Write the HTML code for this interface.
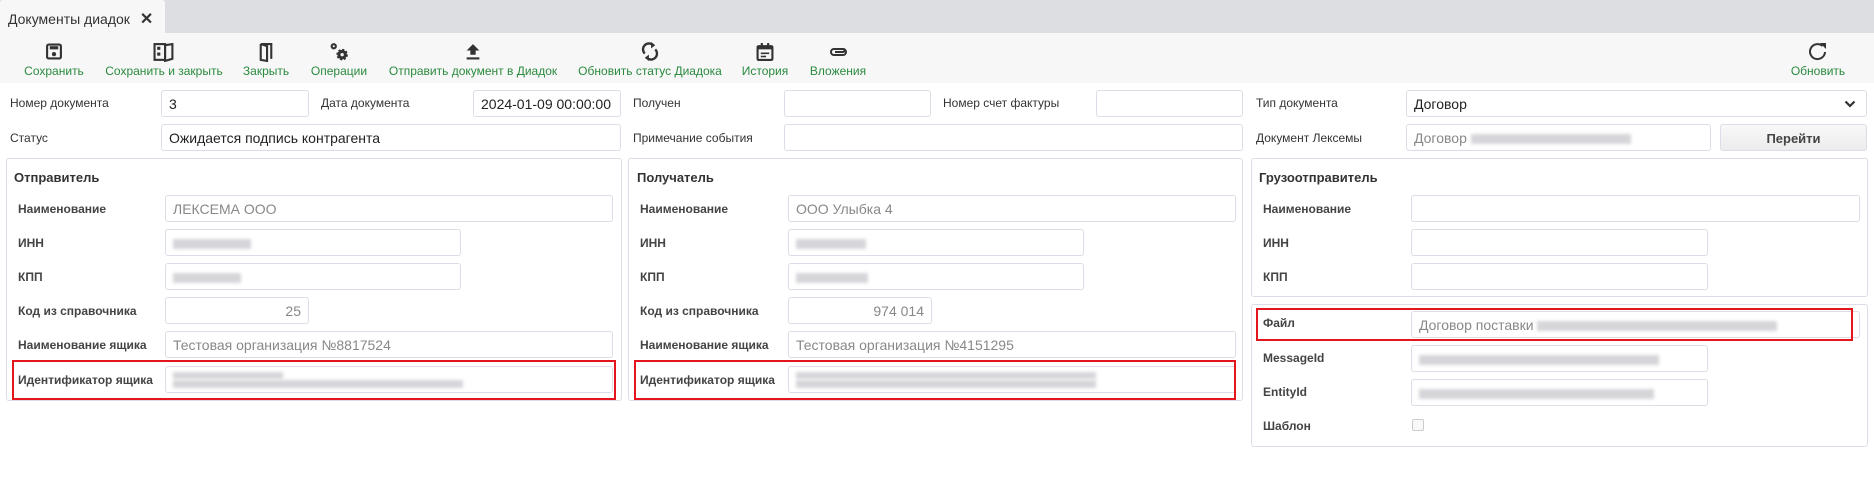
<!DOCTYPE html>
<html><head><meta charset="utf-8"><style>
*{box-sizing:border-box;margin:0;padding:0}
body{width:1874px;height:479px;background:#fff;font-family:"Liberation Sans",sans-serif;color:#333;position:relative;overflow:hidden}
.a{position:absolute}
.tabbar{left:0;top:0;width:1874px;height:33px;background:#dcdee2}
.tab{left:0;top:0;width:165px;height:33px;background:#f7f7f7;border-radius:3px 3px 0 0;font-size:14px;color:#333;padding:9px 0 0 8px}
.tb{left:0;top:33px;width:1874px;height:50px;background:#f7f7f7}
.ti{font-size:12px;color:#2a8a3e;text-align:center;white-space:nowrap;top:64px;transform:translateX(-50%)}
.ic{top:43px;transform:translateX(-50%)}
.lbl{font-size:12px;color:#333;white-space:nowrap}
.lb{font-size:12px;font-weight:bold;color:#444;white-space:nowrap}
.in{border:1px solid #dcdde6;border-radius:3px;background:#fff;height:27px;font-size:14px;padding:5px 7px;color:#222;white-space:nowrap;overflow:hidden}
.ro{color:#888}
.box{border:1px solid #dcdde6;border-radius:3px}
.red{border:2px solid #e3151d}
.bl{display:inline-block;height:10px;background:#d6d6da;filter:blur(1.5px);vertical-align:middle}
.ttl{font-size:13px;font-weight:bold;color:#333}
</style></head><body>
<div class="a tabbar"></div>
<div class="a tab">Документы диадок <span style="font-size:16px;margin-left:6px;font-weight:bold">✕</span></div>
<div class="a tb"></div>

<svg class="a ic" style="left:54px" width="17" height="17" viewBox="0 0 16 16"><rect x="1.5" y="1.5" width="13" height="13" rx="1.5" fill="none" stroke="#333" stroke-width="2"/><rect x="4" y="3" width="8" height="3" fill="#333"/><circle cx="8" cy="10.5" r="2" fill="#333"/></svg>
<svg class="a ic" style="left:164px" width="21" height="19" viewBox="0 0 20 18"><rect x="1" y="1" width="10" height="15" fill="none" stroke="#333" stroke-width="2"/><rect x="3.5" y="3.5" width="3" height="3" fill="#333"/><rect x="3.5" y="9" width="3" height="3" fill="#333"/><path d="M11 2 L18 1 L18 15 L11 17 Z" fill="none" stroke="#333" stroke-width="2"/></svg>
<svg class="a ic" style="left:266px" width="15" height="19" viewBox="0 0 14 18"><path d="M2 1 L12 1 L12 15 M2 1 L2 16 L8 17 L8 3 L2 1" fill="none" stroke="#333" stroke-width="2"/></svg>
<svg class="a ic" style="left:339px;top:41px" width="21" height="21" viewBox="0 0 20 20"><circle cx="5" cy="5" r="3" fill="#333"/><circle cx="5" cy="5" r="1" fill="#f7f7f7"/><circle cx="13" cy="13" r="4.5" fill="#333" stroke="#333" stroke-width="2" stroke-dasharray="2 1.5"/><circle cx="13" cy="13" r="1.6" fill="#f7f7f7"/></svg>
<svg class="a ic" style="left:473px" width="15" height="17" viewBox="0 0 14 16"><path d="M7 1 L13 7 L9.5 7 L9.5 11 L4.5 11 L4.5 7 L1 7 Z" fill="#333"/><rect x="1" y="13.5" width="12" height="2" fill="#333"/></svg>
<svg class="a ic" style="left:650px;top:41px" width="17" height="21" viewBox="0 0 16 20"><path d="M3 12 A5.5 5.5 0 0 1 11 4" fill="none" stroke="#333" stroke-width="2.2"/><path d="M9 1 L13 4 L9 7 Z" fill="#333"/><path d="M13 8 A5.5 5.5 0 0 1 5 16" fill="none" stroke="#333" stroke-width="2.2"/><path d="M7 13 L3 16 L7 19 Z" fill="#333"/></svg>
<svg class="a ic" style="left:765px" width="17" height="18" viewBox="0 0 16 17"><rect x="1" y="3" width="14" height="13" rx="1" fill="none" stroke="#333" stroke-width="2"/><rect x="1" y="3" width="14" height="3" fill="#333"/><rect x="4" y="0" width="2" height="4" fill="#333"/><rect x="10" y="0" width="2" height="4" fill="#333"/><rect x="4" y="9" width="8" height="1.5" fill="#333"/><rect x="4" y="12" width="5" height="1.5" fill="#333"/></svg>
<svg class="a ic" style="left:838px;top:46px" width="19" height="12" viewBox="0 0 18 12"><path d="M14 9 L5 9 A3 3 0 0 1 5 3 L14 3 A1.5 1.5 0 0 1 14 6 L6 6" fill="none" stroke="#333" stroke-width="2"/><path d="M5 9 L14 9 A3 3 0 0 0 14 3" fill="none" stroke="#333" stroke-width="2"/></svg>
<svg class="a ic" style="left:1818px;top:41px" width="22" height="22" viewBox="0 0 22 22"><path d="M18 11 A7.5 7.5 0 1 1 15.5 5" fill="none" stroke="#333" stroke-width="2"/><path d="M13 2 L19 2 L19 8 Z" fill="#333"/></svg>

<div class="a ti" style="left:54px">Сохранить</div>
<div class="a ti" style="left:164px">Сохранить и закрыть</div>
<div class="a ti" style="left:266px">Закрыть</div>
<div class="a ti" style="left:339px">Операции</div>
<div class="a ti" style="left:473px">Отправить документ в Диадок</div>
<div class="a ti" style="left:650px">Обновить статус Диадока</div>
<div class="a ti" style="left:765px">История</div>
<div class="a ti" style="left:838px">Вложения</div>
<div class="a ti" style="left:1818px">Обновить</div>

<div class="a lbl" style="left:10px;top:96px">Номер документа</div>
<div class="a in" style="left:161px;top:90px;width:148px">3</div>
<div class="a lbl" style="left:321px;top:96px">Дата документа</div>
<div class="a in" style="left:473px;top:90px;width:148px">2024-01-09 00:00:00</div>
<div class="a lbl" style="left:633px;top:96px">Получен</div>
<div class="a in" style="left:784px;top:90px;width:147px"></div>
<div class="a lbl" style="left:943px;top:96px">Номер счет фактуры</div>
<div class="a in" style="left:1096px;top:90px;width:147px"></div>
<div class="a lbl" style="left:1256px;top:96px">Тип документа</div>
<div class="a in" style="left:1406px;top:90px;width:461px">Договор<svg class="a" style="right:10px;top:9px" width="12" height="8" viewBox="0 0 12 8"><path d="M1.5 1.5 L6 6 L10.5 1.5" fill="none" stroke="#333" stroke-width="2.2"/></svg></div>

<div class="a lbl" style="left:10px;top:131px">Статус</div>
<div class="a in" style="left:161px;top:124px;width:460px">Ожидается подпись контрагента</div>
<div class="a lbl" style="left:633px;top:131px">Примечание события</div>
<div class="a in" style="left:784px;top:124px;width:459px"></div>
<div class="a lbl" style="left:1256px;top:131px">Документ Лексемы</div>
<div class="a in ro" style="left:1406px;top:124px;width:305px">Договор <span class="bl" style="width:160px"></span></div>
<div class="a in" style="left:1720px;top:124px;width:147px;background:linear-gradient(#f8f8f8,#ececec);text-align:center;font-size:13px;font-weight:bold;color:#444;padding-top:6px">Перейти</div>

<div class="a box" style="left:6px;top:158px;width:616px;height:243px"></div>
<div class="a ttl" style="left:14px;top:170px">Отправитель</div>
<div class="a lb" style="left:18px;top:202px">Наименование</div>
<div class="a in ro" style="left:165px;top:195px;width:448px">ЛЕКСЕМА ООО</div>
<div class="a lb" style="left:18px;top:236px">ИНН</div>
<div class="a in" style="left:165px;top:229px;width:296px"><span class="bl" style="width:78px"></span></div>
<div class="a lb" style="left:18px;top:270px">КПП</div>
<div class="a in" style="left:165px;top:263px;width:296px"><span class="bl" style="width:68px"></span></div>
<div class="a lb" style="left:18px;top:304px">Код из справочника</div>
<div class="a in ro" style="left:165px;top:297px;width:144px;text-align:right">25</div>
<div class="a lb" style="left:18px;top:338px">Наименование ящика</div>
<div class="a in ro" style="left:165px;top:331px;width:448px">Тестовая организация №8817524</div>
<div class="a lb" style="left:18px;top:373px">Идентификатор ящика</div>
<div class="a in" style="left:165px;top:366px;width:448px;padding-top:3px;line-height:8px"><span class="bl" style="width:110px;height:7px"></span><br><span class="bl" style="width:290px;height:8px"></span></div>
<div class="a red" style="left:12px;top:360px;width:604px;height:40px"></div>

<div class="a box" style="left:628px;top:158px;width:615px;height:243px"></div>
<div class="a ttl" style="left:637px;top:170px">Получатель</div>
<div class="a lb" style="left:640px;top:202px">Наименование</div>
<div class="a in ro" style="left:788px;top:195px;width:448px">ООО Улыбка 4</div>
<div class="a lb" style="left:640px;top:236px">ИНН</div>
<div class="a in" style="left:788px;top:229px;width:296px"><span class="bl" style="width:70px"></span></div>
<div class="a lb" style="left:640px;top:270px">КПП</div>
<div class="a in" style="left:788px;top:263px;width:296px"><span class="bl" style="width:72px"></span></div>
<div class="a lb" style="left:640px;top:304px">Код из справочника</div>
<div class="a in ro" style="left:788px;top:297px;width:144px;text-align:right">974 014</div>
<div class="a lb" style="left:640px;top:338px">Наименование ящика</div>
<div class="a in ro" style="left:788px;top:331px;width:448px">Тестовая организация №4151295</div>
<div class="a lb" style="left:640px;top:373px">Идентификатор ящика</div>
<div class="a in" style="left:788px;top:366px;width:448px;padding-top:3px;line-height:8px"><span class="bl" style="width:300px;height:7px"></span><br><span class="bl" style="width:300px;height:8px"></span></div>
<div class="a red" style="left:634px;top:360px;width:602px;height:40px"></div>

<div class="a box" style="left:1251px;top:158px;width:617px;height:139px"></div>
<div class="a ttl" style="left:1259px;top:170px">Грузоотправитель</div>
<div class="a lb" style="left:1263px;top:202px">Наименование</div>
<div class="a in" style="left:1411px;top:195px;width:449px"></div>
<div class="a lb" style="left:1263px;top:236px">ИНН</div>
<div class="a in" style="left:1411px;top:229px;width:297px"></div>
<div class="a lb" style="left:1263px;top:270px">КПП</div>
<div class="a in" style="left:1411px;top:263px;width:297px"></div>

<div class="a box" style="left:1251px;top:304px;width:617px;height:143px"></div>
<div class="a lb" style="left:1263px;top:316px">Файл</div>
<div class="a in ro" style="left:1411px;top:311px;width:449px">Договор поставки <span class="bl" style="width:240px"></span></div>
<div class="a red" style="left:1256px;top:308px;width:597px;height:33px"></div>
<div class="a lb" style="left:1263px;top:351px">MessageId</div>
<div class="a in" style="left:1411px;top:345px;width:297px"><span class="bl" style="width:240px"></span></div>
<div class="a lb" style="left:1263px;top:385px">EntityId</div>
<div class="a in" style="left:1411px;top:379px;width:297px"><span class="bl" style="width:235px"></span></div>
<div class="a lb" style="left:1263px;top:419px">Шаблон</div>
<div class="a" style="left:1412px;top:419px;width:12px;height:12px;border:1px solid #ccc;border-radius:2px;background:#f8f8f8"></div>
</body></html>
